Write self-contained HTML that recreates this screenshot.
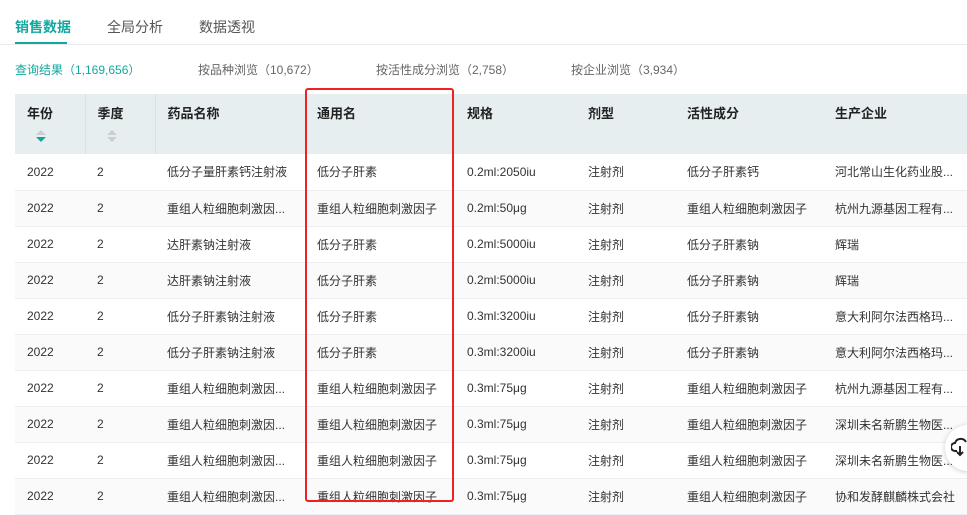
<html><head><style>
body{margin:0;width:967px;height:503px;overflow:hidden;background:#fff;font-family:"Liberation Sans","Noto Sans CJK SC",sans-serif;position:relative;color:#333}
.tabs{position:absolute;top:0;left:0;right:0;height:44px;border-bottom:1px solid #e8eaee}
.tab{position:absolute;top:17px;font-size:14px;color:#555}
.tab.a{color:#13a89e;font-weight:bold}
.ul{position:absolute;left:15px;top:42px;width:52px;height:2px;background:#13a89e}
.sub{position:absolute;top:61px;font-size:12px;color:#666}
table{position:absolute;left:15px;top:94px;border-collapse:collapse;font-size:12px;table-layout:fixed;width:990px}
th{background:#e6eef0;height:60px;text-align:left;vertical-align:top;padding:9px 0 0 12px;font-size:13px;color:#222;box-sizing:border-box}
th.s{border-right:1px solid #d6e2e4}
td{height:36px;padding:0 0 0 12px;border-bottom:1px solid #ebeef3;white-space:nowrap;overflow:hidden;text-overflow:ellipsis;color:#333}
tr:nth-child(odd) td{background:#fafafa}
.box{position:absolute;left:305px;top:88px;width:145px;height:410px;border:2px solid #ee2222;border-radius:3px}
</style></head><body>
<div class="tabs"><span class="tab a" style="left:15px">销售数据</span><span class="tab" style="left:107px">全局分析</span><span class="tab" style="left:199px">数据透视</span><div class="ul"></div></div>
<span class="sub" style="left:15px;color:#13a89e">查询结果（1,169,656）</span>
<span class="sub" style="left:198px">按品种浏览（10,672）</span>
<span class="sub" style="left:376px">按活性成分浏览（2,758）</span>
<span class="sub" style="left:571px">按企业浏览（3,934）</span>
<table>
<colgroup><col style="width:70px"><col style="width:70px"><col style="width:150px"><col style="width:150px"><col style="width:121px"><col style="width:99px"><col style="width:148px"><col style="width:182px"></colgroup>
<tr><th class="s">年份<span style="display:block;margin-top:8px"><span style="display:block;width:0;border:5px solid transparent;border-bottom-color:#c8ced2;border-top:0;margin-left:9px"></span><span style="display:block;width:0;border:5px solid transparent;border-top-color:#13a89e;border-bottom:0;margin:2px 0 0 9px"></span></span></th><th class="s">季度<span style="display:block;margin-top:8px"><span style="display:block;width:0;border:5px solid transparent;border-bottom-color:#c8ced2;border-top:0;margin-left:9px"></span><span style="display:block;width:0;border:5px solid transparent;border-top-color:#c8ced2;border-bottom:0;margin:2px 0 0 9px"></span></span></th><th>药品名称</th><th>通用名</th><th>规格</th><th>剂型</th><th>活性成分</th><th>生产企业</th></tr>
<tr><td>2022</td><td>2</td><td>低分子量肝素钙注射液</td><td>低分子肝素</td><td>0.2ml:2050iu</td><td>注射剂</td><td>低分子肝素钙</td><td>河北常山生化药业股...</td></tr>
<tr><td>2022</td><td>2</td><td>重组人粒细胞刺激因...</td><td>重组人粒细胞刺激因子</td><td>0.2ml:50μg</td><td>注射剂</td><td>重组人粒细胞刺激因子</td><td>杭州九源基因工程有...</td></tr>
<tr><td>2022</td><td>2</td><td>达肝素钠注射液</td><td>低分子肝素</td><td>0.2ml:5000iu</td><td>注射剂</td><td>低分子肝素钠</td><td>辉瑞</td></tr>
<tr><td>2022</td><td>2</td><td>达肝素钠注射液</td><td>低分子肝素</td><td>0.2ml:5000iu</td><td>注射剂</td><td>低分子肝素钠</td><td>辉瑞</td></tr>
<tr><td>2022</td><td>2</td><td>低分子肝素钠注射液</td><td>低分子肝素</td><td>0.3ml:3200iu</td><td>注射剂</td><td>低分子肝素钠</td><td>意大利阿尔法西格玛...</td></tr>
<tr><td>2022</td><td>2</td><td>低分子肝素钠注射液</td><td>低分子肝素</td><td>0.3ml:3200iu</td><td>注射剂</td><td>低分子肝素钠</td><td>意大利阿尔法西格玛...</td></tr>
<tr><td>2022</td><td>2</td><td>重组人粒细胞刺激因...</td><td>重组人粒细胞刺激因子</td><td>0.3ml:75μg</td><td>注射剂</td><td>重组人粒细胞刺激因子</td><td>杭州九源基因工程有...</td></tr>
<tr><td>2022</td><td>2</td><td>重组人粒细胞刺激因...</td><td>重组人粒细胞刺激因子</td><td>0.3ml:75μg</td><td>注射剂</td><td>重组人粒细胞刺激因子</td><td>深圳未名新鹏生物医...</td></tr>
<tr><td>2022</td><td>2</td><td>重组人粒细胞刺激因...</td><td>重组人粒细胞刺激因子</td><td>0.3ml:75μg</td><td>注射剂</td><td>重组人粒细胞刺激因子</td><td>深圳未名新鹏生物医...</td></tr>
<tr><td>2022</td><td>2</td><td>重组人粒细胞刺激因...</td><td>重组人粒细胞刺激因子</td><td>0.3ml:75μg</td><td>注射剂</td><td>重组人粒细胞刺激因子</td><td>协和发酵麒麟株式会社</td></tr>
</table>
<div class="box"></div>
<div style="position:absolute;left:945px;top:425px;width:46px;height:46px;border-radius:50%;background:#fff;box-shadow:0 1px 6px rgba(0,0,0,.2)"></div>
<svg style="position:absolute;left:951px;top:436px" width="18" height="22" viewBox="0 0 18 22"><path d="M6 15H4a4 4 0 0 1 0-8 6 6 0 0 1 11-1M9 10v9m-3-3 3 3 3-3" fill="none" stroke="#222" stroke-width="2"/></svg>
</body></html>
